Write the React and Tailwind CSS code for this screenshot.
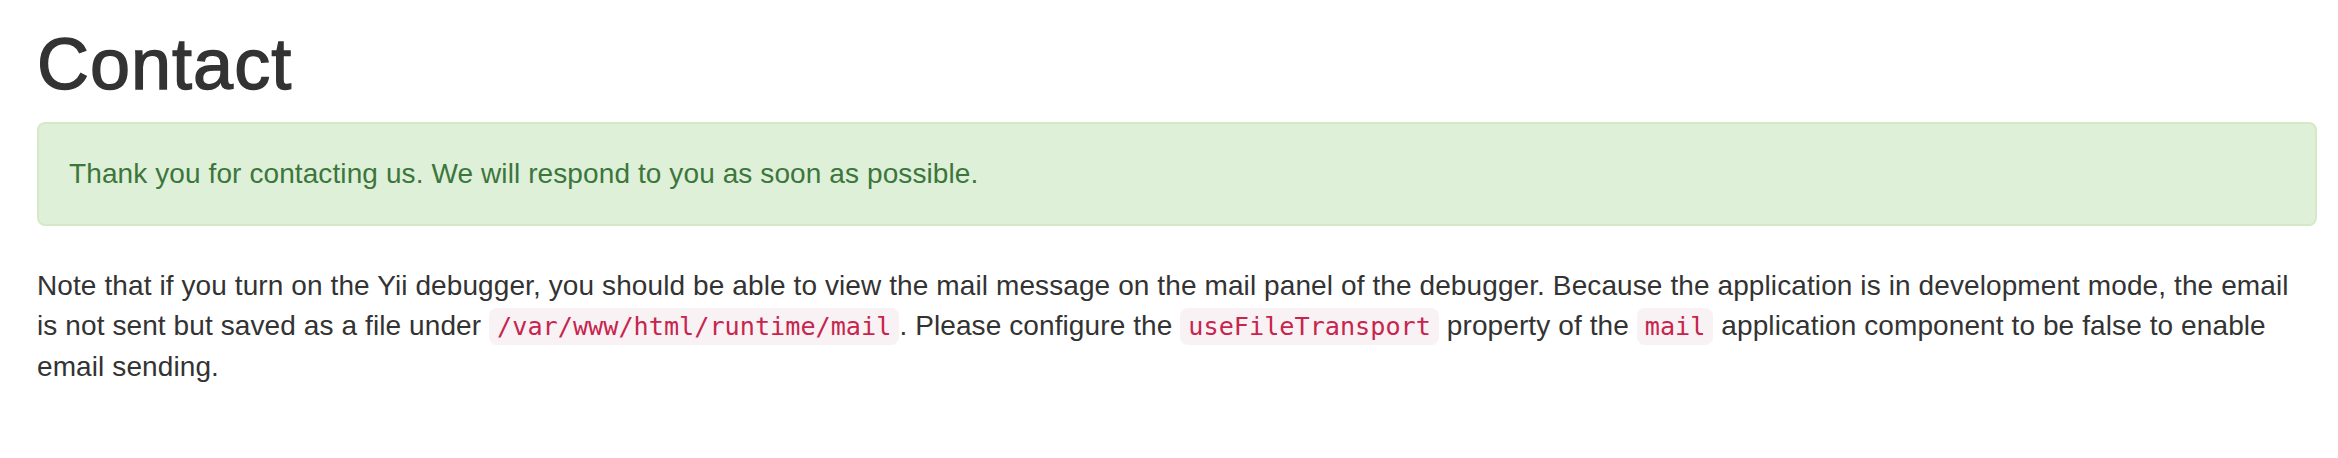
export default function App() {
  const code = "font-['DejaVu_Sans_Mono',monospace] text-[25.2px] text-[#c7254e] bg-[#f9f2f4] px-[8px] py-[4px] rounded-[8px]";
  return (
    <div className="min-h-[458px] bg-white font-['Liberation_Sans',Arial,sans-serif] text-[28px] leading-[40px] text-[#333333] pl-[37px] pr-[21px] pt-[26px]">
      <h1 className="text-[72px] leading-[76px] font-normal tracking-[1px] [-webkit-text-stroke:1.4px_#333333] mb-[20px]">Contact</h1>
      <div className="bg-[#dff0d8] border-2 border-[#d6e9c6] rounded-[8px] p-[30px] text-[#3c763d] tracking-[0.1px] mb-[40px]">
        Thank you for contacting us. We will respond to you as soon as possible.
      </div>
      <p className="mb-[20px] mr-[26px] tracking-[0.1px]">
        Note that if you turn on the Yii debugger, you should be able to view the mail message on the mail panel of the debugger. Because the application is in development mode, the email is not sent but saved as a file under{" "}
        <code className={code + " tracking-normal"}>/var/www/html/runtime/mail</code>. Please configure the{" "}
        <code className={code + " tracking-normal"}>useFileTransport</code> property of the{" "}
        <code className={code + " tracking-normal"}>mail</code> application component to be false to enable email sending.
      </p>
    </div>
  );
}
